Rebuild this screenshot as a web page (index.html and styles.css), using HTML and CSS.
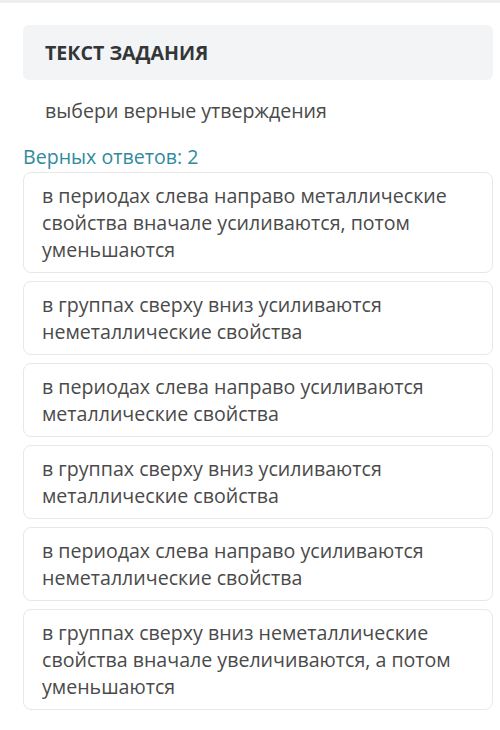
FILE: index.html
```html
<!DOCTYPE html>
<html>
  <head>
    <title>Текст задания</title>
    <meta charset="UTF-8">
    <link rel="stylesheet" href="styles.css">
  </head>
  <body>
    <div id="topline"></div>
    <div id="content">
      <div class="task-head">ТЕКСТ ЗАДАНИЯ</div>
      <p class="task-text">выбери верные утверждения</p>
      <p class="answers-count">Верных ответов: 2</p>
      <div class="answers">
        <div class="answer">в периодах слева направо металлические свойства вначале усиливаются, потом уменьшаются</div>
        <div class="answer">в группах сверху вниз усиливаются неметаллические свойства</div>
        <div class="answer">в периодах слева направо усиливаются металлические свойства</div>
        <div class="answer">в группах сверху вниз усиливаются металлические свойства</div>
        <div class="answer">в периодах слева направо усиливаются неметаллические свойства</div>
        <div class="answer">в группах сверху вниз неметаллические свойства вначале увеличиваются, а потом уменьшаются</div>
      </div>
    </div>
  </body>
</html>
```

FILE: styles.css
```css
body
{
  margin: 0;
  background-color: #ffffff;
  font-family: "Open Sans", "Noto Sans", sans-serif;
  color: #4a4a4a;
}
#topline
{
  height: 3px;
  background-color: #eeeeee;
}
#content
{
  padding: 22px 7px 0 23px;
}
.task-head
{
  background-color: #f2f4f5;
  border-radius: 6px;
  height: 55px;
  padding-left: 22px;
  display: flex;
  align-items: center;
  font-size: 19.6px;
  font-weight: bold;
  color: #333639;
}
.task-text
{
  margin: 18px 0 0 22px;
  font-size: 19.6px;
  line-height: 26px;
}
.answers-count
{
  margin: 21px 0 0 0;
  font-size: 19.6px;
  line-height: 24px;
  color: #2f8b9c;
}
.answers
{
  display: flex;
  flex-direction: column;
  gap: 8px;
  margin-top: 3px;
}
.answer
{
  border: 1px solid #e8e8e8;
  border-radius: 8px;
  padding: 9px 20px 9px 18px;
  font-size: 19.6px;
  line-height: 27px;
}
```
